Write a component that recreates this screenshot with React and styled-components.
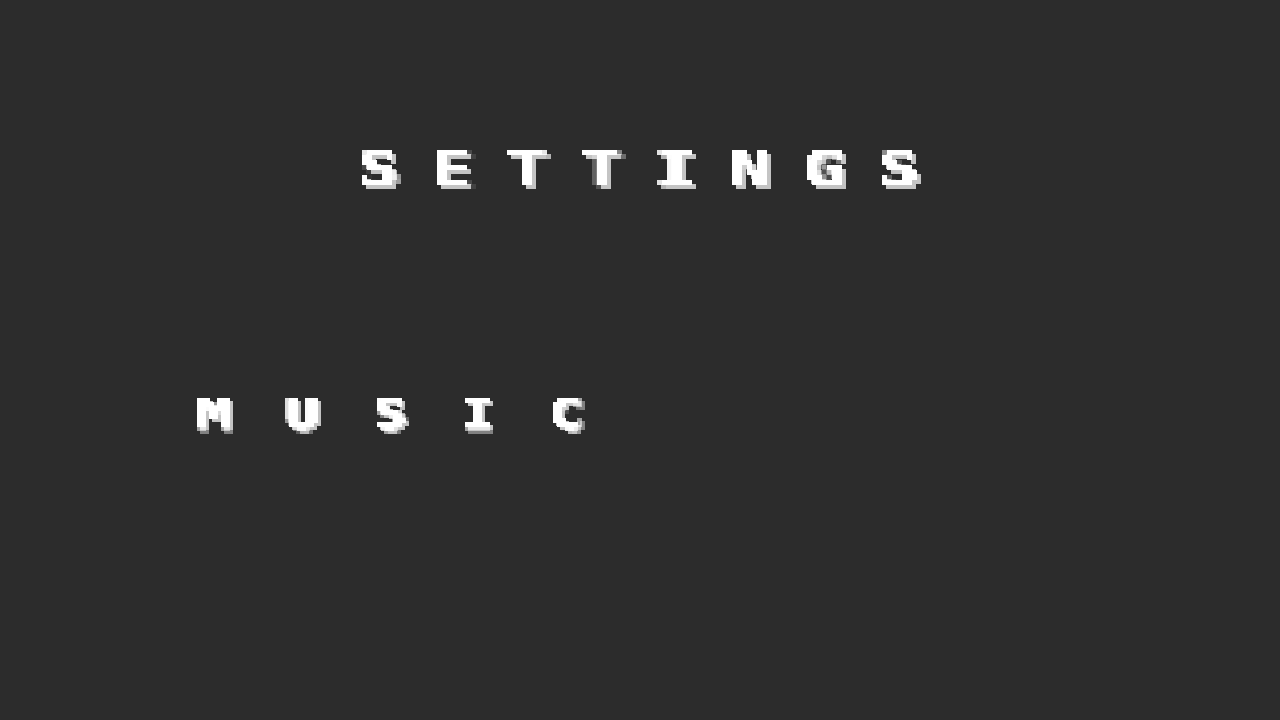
import React from 'react';
import styled, { createGlobalStyle } from 'styled-components';

const GlobalStyle = createGlobalStyle`
    html, body {
        margin: 0;
        padding: 0;
        background: #2c2c2c;
    }
`

const Screen = styled.main`
    width: 1280px;
    height: 720px;
    overflow: hidden;
    display: flex;
    flex-direction: column;
    background: #2c2c2c;
    color: #ffffff;
    font-family: "DejaVu Sans Mono", "Liberation Mono", monospace;
    font-weight: 700;
`
const FilterDefs = styled.svg`
    width: 0;
    height: 0;
    position: absolute;
`
const Title = styled.h1`
    margin: 140px 0 0 357px;
    font-size: 48px;
    line-height: 56px;
    font-weight: 700;
    white-space: nowrap;
    filter: url(#pixel5) drop-shadow(4px 4px 0 #c4c4c4);
`
const SettingRow = styled.section`
    display: flex;
    margin: 194px 0 0 197px;
`
const SettingLabel = styled.h2`
    flex: 1;
    margin: 0;
    font-size: 40px;
    line-height: 48px;
    font-weight: 700;
    white-space: nowrap;
    filter: url(#pixel4) drop-shadow(3px 3px 0 #c4c4c4);
`
// stretched inside the filtered heading, so the pixel grid stays square
const Wide = styled.span`
    display: inline-block;
    transform: scaleX(${props => props.$scale});
    transform-origin: left center;
    letter-spacing: ${props => props.$spacing}px;
    -webkit-text-stroke: ${props => props.$stroke}px #ffffff;
`

const PixelFilter = ({ id, size }) => (
    <filter id={id} x="0" y="0" width="100%" height="100%" colorInterpolationFilters="sRGB">
        <feFlood x={Math.floor(size / 2)} y={Math.floor(size / 2)} width="1" height="1" />
        <feComposite width={size} height={size} />
        <feTile result="grid" />
        <feComposite in="SourceGraphic" in2="grid" operator="in" />
        <feMorphology operator="dilate" radius={Math.floor(size / 2)} />
    </filter>
)

const App = () => {
    return (
        <Screen>
            <GlobalStyle />
            <FilterDefs aria-hidden="true">
                <PixelFilter id="pixel5" size={5} />
                <PixelFilter id="pixel4" size={4} />
            </FilterDefs>
            <Title><Wide $scale={1.42} $spacing={23.5} $stroke={1.5}>SETTINGS</Wide></Title>
            <SettingRow>
                <SettingLabel><Wide $scale={1.4} $spacing={38.8} $stroke={1}>MUSIC</Wide></SettingLabel>
            </SettingRow>
        </Screen>
    )
}

export default App;
